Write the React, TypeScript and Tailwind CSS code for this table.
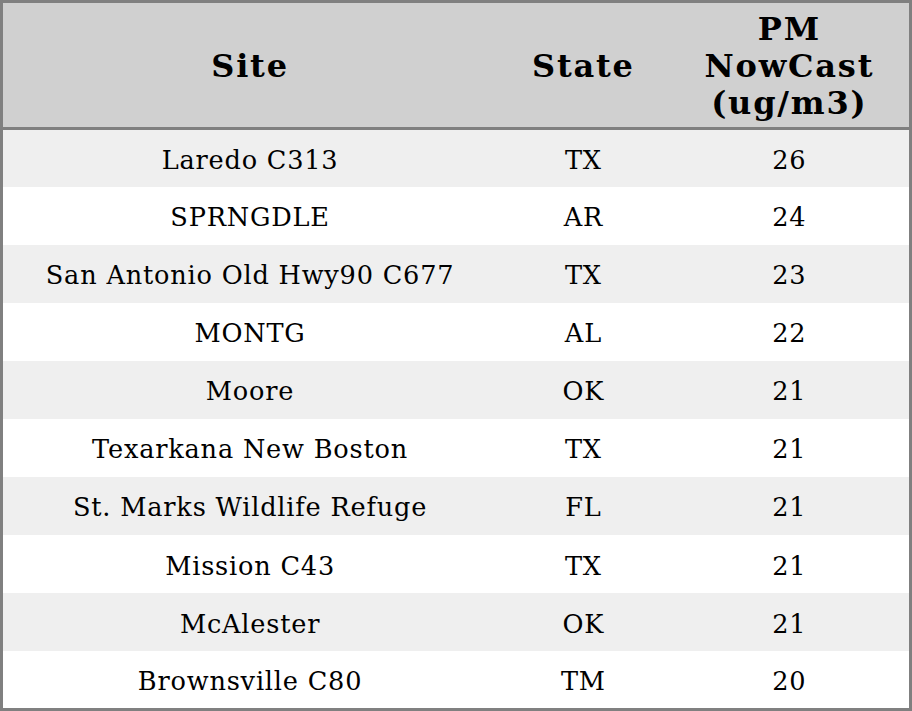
import React from "react";

const rows = [
  { site: "Laredo C313", state: "TX", pm: 26 },
  { site: "SPRNGDLE", state: "AR", pm: 24 },
  { site: "San Antonio Old Hwy90 C677", state: "TX", pm: 23 },
  { site: "MONTG", state: "AL", pm: 22 },
  { site: "Moore", state: "OK", pm: 21 },
  { site: "Texarkana New Boston", state: "TX", pm: 21 },
  { site: "St. Marks Wildlife Refuge", state: "FL", pm: 21 },
  { site: "Mission C43", state: "TX", pm: 21 },
  { site: "McAlester", state: "OK", pm: 21 },
  { site: "Brownsville C80", state: "TM", pm: 20 },
];

const App: React.FC = () => {
  return (
    <div className="w-[912px] h-[711px] bg-white font-['DejaVu_Serif',serif] text-black">
      <table className="w-full h-full border-collapse border-[3px] border-[#808080] table-fixed">
        <colgroup>
          <col className="w-[494px]" />
          <col className="w-[172px]" />
          <col className="w-[240px]" />
        </colgroup>
        <thead>
          <tr className="bg-[#d0d0d0] h-[127px] border-b-[3px] border-[#808080]">
            <th className="text-[32px] font-bold tracking-[1.8px] leading-[37px] text-center pt-[2px]">Site</th>
            <th className="text-[32px] font-bold tracking-[1.8px] leading-[37px] text-center pt-[2px]">State</th>
            <th className="text-[32px] font-bold tracking-[1.8px] leading-[37px] text-center pt-[2px]">
              PM
              <br />
              NowCast
              <br />
              (ug/m3)
            </th>
          </tr>
        </thead>
        <tbody>
          {rows.map((r, i) => (
            <tr key={i} className={i % 2 === 0 ? "bg-[#efefef]" : "bg-white"}>
              <td className="text-[25.6px] tracking-[0.8px] text-center h-[57.7px] p-0 pt-[3px]">{r.site}</td>
              <td className="text-[25.6px] tracking-[0.8px] text-center p-0 pt-[3px]">{r.state}</td>
              <td className="text-[25.6px] tracking-[0.8px] text-center p-0 pt-[3px]">{r.pm}</td>
            </tr>
          ))}
        </tbody>
      </table>
    </div>
  );
};

export default App;
